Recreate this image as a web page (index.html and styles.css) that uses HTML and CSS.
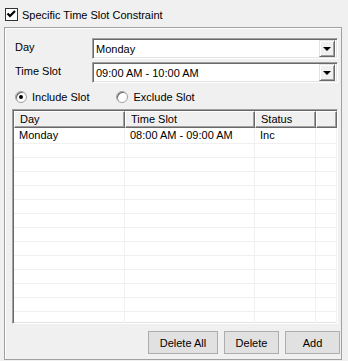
FILE: index.html
```html
<!DOCTYPE html>
<html lang="en">
<head>
  <meta charset="UTF-8" />
  <title>Specific Time Slot Constraint</title>
  <link rel="stylesheet" href="styles.css">
</head>
<body>
  <div class="panel">
    <div class="check-row">
      <span class="checkbox">
        <svg width="11" height="11" viewBox="0 0 11 11"><path d="M1.5 4.5 L4 7 L9 2" fill="none" stroke="#000" stroke-width="2.2"/></svg>
      </span>
      <span>Specific Time Slot Constraint</span>
    </div>

    <div class="group">
      <div class="field">
        <span class="field-label">Day</span>
        <div class="combo">
          <span class="combo-text">Monday</span>
          <span class="combo-btn"><span class="arrow"></span></span>
        </div>
      </div>
      <div class="field">
        <span class="field-label">Time Slot</span>
        <div class="combo">
          <span class="combo-text">09:00 AM - 10:00 AM</span>
          <span class="combo-btn"><span class="arrow"></span></span>
        </div>
      </div>

      <div class="radios">
        <span class="radio-item"><span class="radio checked"></span>Include Slot</span>
        <span class="radio-item"><span class="radio"></span>Exclude Slot</span>
      </div>

      <div class="listview">
        <div class="lv-row lv-header">
          <span class="c1">Day</span>
          <span class="c2">Time Slot</span>
          <span class="c3">Status</span>
          <span class="c4"></span>
        </div>
        <div class="lv-row lv-first">
          <span class="c1">Monday</span>
          <span class="c2">08:00 AM - 09:00 AM</span>
          <span class="c3">Inc</span>
          <span class="c4"></span>
        </div>
        <div class="lv-row"><span class="c1"></span><span class="c2"></span><span class="c3"></span><span class="c4"></span></div>
        <div class="lv-row"><span class="c1"></span><span class="c2"></span><span class="c3"></span><span class="c4"></span></div>
        <div class="lv-row"><span class="c1"></span><span class="c2"></span><span class="c3"></span><span class="c4"></span></div>
        <div class="lv-row"><span class="c1"></span><span class="c2"></span><span class="c3"></span><span class="c4"></span></div>
        <div class="lv-row"><span class="c1"></span><span class="c2"></span><span class="c3"></span><span class="c4"></span></div>
        <div class="lv-row"><span class="c1"></span><span class="c2"></span><span class="c3"></span><span class="c4"></span></div>
        <div class="lv-row"><span class="c1"></span><span class="c2"></span><span class="c3"></span><span class="c4"></span></div>
        <div class="lv-row"><span class="c1"></span><span class="c2"></span><span class="c3"></span><span class="c4"></span></div>
        <div class="lv-row"><span class="c1"></span><span class="c2"></span><span class="c3"></span><span class="c4"></span></div>
        <div class="lv-row"><span class="c1"></span><span class="c2"></span><span class="c3"></span><span class="c4"></span></div>
        <div class="lv-row"><span class="c1"></span><span class="c2"></span><span class="c3"></span><span class="c4"></span></div>
        <div class="lv-row"><span class="c1"></span><span class="c2"></span><span class="c3"></span><span class="c4"></span></div>
        <div class="lv-row"><span class="c1"></span><span class="c2"></span><span class="c3"></span><span class="c4"></span></div>
      </div>

      <div class="buttons">
        <button class="btn btn-wide">Delete All</button>
        <button class="btn">Delete</button>
        <button class="btn">Add</button>
      </div>
    </div>
  </div>
</body>
</html>
```

FILE: styles.css
```css
* {
  box-sizing: border-box;
}

body {
  margin: 0;
  background-color: #f0f0f0;
  font-family: 'Liberation Sans', Arial, sans-serif;
  font-size: 11px;
  color: #000;
}

.panel {
  width: 348px;
  height: 361px;
  overflow: hidden;
}

.check-row {
  display: flex;
  align-items: center;
  gap: 4px;
  height: 27px;
  padding: 2px 0 0 5px;
}

.checkbox {
  width: 13px;
  height: 13px;
  border: 1px solid #333;
  background-color: #fff;
  display: flex;
  align-items: center;
  justify-content: center;
}

.group {
  margin-left: 4px;
  width: 338px;
  height: 333px;
  border: 1px solid #a0a0a0;
  box-shadow: inset 1px 1px 0 #fff;
  padding: 10px 3px 0 7px;
}

.field {
  display: flex;
  align-items: center;
  height: 21px;
  margin-bottom: 3px;
}

.field-label {
  width: 80px;
  padding-left: 3px;
  margin-top: -4px;
}

.combo {
  flex: 1;
  height: 21px;
  display: flex;
  align-items: center;
  background-color: #fff;
  border-top: 1px solid #a0a0a0;
  border-left: 1px solid #a0a0a0;
  border-right: 1px solid #fff;
  border-bottom: 1px solid #fff;
  box-shadow: inset 1px 1px 0 #696969, inset -1px -1px 0 #e3e3e3;
  padding: 2px 2px 2px 3px;
}

.combo-text {
  flex: 1;
}

.combo-btn {
  width: 16px;
  height: 17px;
  background-color: #f0f0f0;
  border-top: 1px solid #e3e3e3;
  border-left: 1px solid #e3e3e3;
  border-right: 1px solid #696969;
  border-bottom: 1px solid #696969;
  box-shadow: inset 1px 1px 0 #fff, inset -1px -1px 0 #a0a0a0;
  display: flex;
  align-items: center;
  justify-content: center;
}

.arrow {
  width: 0;
  height: 0;
  border-left: 4px solid transparent;
  border-right: 4px solid transparent;
  border-top: 4px solid #000;
  margin-top: 1px;
}

.radios {
  display: flex;
  gap: 27px;
  padding-left: 3px;
  margin-top: 7px;
  height: 14px;
  align-items: center;
}

.radio-item {
  display: flex;
  align-items: center;
  gap: 5px;
}

.radio {
  width: 12px;
  height: 12px;
  border-radius: 50%;
  background-color: #fff;
  border: 1px solid #a0a0a0;
  box-shadow: inset 1px 1px 0 #696969;
  display: flex;
  align-items: center;
  justify-content: center;
}

.radio.checked::after {
  content: "";
  width: 4px;
  height: 4px;
  border-radius: 50%;
  background-color: #000;
}

.listview {
  margin-top: 5px;
  width: 326px;
  height: 215px;
  overflow: hidden;
  background-color: #fff;
  border-top: 1px solid #a0a0a0;
  border-left: 1px solid #a0a0a0;
  border-right: 1px solid #fff;
  border-bottom: 1px solid #fff;
  box-shadow: inset 1px 1px 0 #696969, inset -1px -1px 0 #e3e3e3;
  padding: 1px 0 0 1px;
}

.lv-row {
  display: flex;
  height: 14px;
  border-bottom: 1px solid #f0f0f0;
}

.lv-first {
  height: 16px;
}

.lv-row span {
  padding-left: 5px;
  border-right: 1px solid #f0f0f0;
  line-height: 15px;
  white-space: nowrap;
}

.lv-header {
  height: 17px;
  border-bottom: none;
}

.lv-header span {
  background-color: #f0f0f0;
  border-top: 1px solid #fff;
  border-left: 1px solid #fff;
  border-right: 1px solid #696969;
  border-bottom: 1px solid #696969;
  box-shadow: inset -1px -1px 0 #a0a0a0;
  line-height: 14px;
  padding-left: 5px;
}

.c1 {
  width: 111px;
}

.c2 {
  width: 130px;
}

.c3 {
  width: 61px;
}

.c4 {
  flex: 1;
}

.buttons {
  display: flex;
  justify-content: flex-end;
  gap: 6px;
  margin-top: 7px;
  margin-right: -2px;
}

.btn {
  height: 23px;
  width: 55px;
  padding: 0;
  font-family: 'Liberation Sans', Arial, sans-serif;
  font-size: 11px;
  color: #000;
  background-color: #e1e1e1;
  border: 1px solid #adadad;
}

.btn-wide {
  width: 70px;
}
```
